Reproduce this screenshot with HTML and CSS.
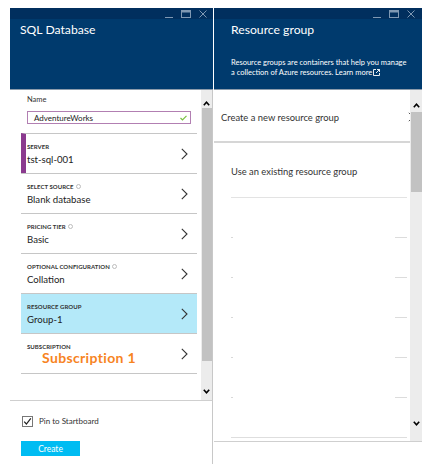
FILE: index.html
```html
<!DOCTYPE html>
<html>
<head>
<meta charset="utf-8">
<link rel="stylesheet" href="styles.css">
</head>
<body>
<div class="page">
  <section class="blade blade-left">
    <header class="head">
      <div class="ctl">
        <svg class="ic-min" width="8" height="8" viewBox="0 0 8 8"><path d="M0 7.5H8" stroke="#7f98b3" stroke-width="1"/></svg>
        <svg class="ic-max" width="10" height="8" viewBox="0 0 10 8"><rect x="0.5" y="0.5" width="9" height="7" fill="none" stroke="#7f98b3" stroke-width="1"/><path d="M0 1.5H10" stroke="#7f98b3" stroke-width="2"/></svg>
        <svg class="ic-close" width="8" height="8" viewBox="0 0 8 8"><path d="M0.5 0.5L7.5 7.5M7.5 0.5L0.5 7.5" stroke="#7f98b3" stroke-width="1"/></svg>
      </div>
      <h1 class="title title-left">SQL Database</h1>
    </header>
    <div class="body">
      <div class="content">
        <div class="name">
          <div class="name-label">Name</div>
          <div class="input">
            <span>AdventureWorks</span>
            <svg width="7" height="6" viewBox="0 0 7 6"><path d="M0.5 3L2.5 5L6.5 0.8" fill="none" stroke="#7ac143" stroke-width="1.2"/></svg>
          </div>
        </div>
        <div class="row row-server">
          <div class="txt"><div class="lbl">SERVER</div><div class="val">tst-sql-001</div></div>
          <svg class="chev" width="7" height="12" viewBox="0 0 7 12"><path d="M0.8 0.8L6 6L0.8 11.2" fill="none" stroke="#333" stroke-width="1.1"/></svg>
        </div>
        <div class="row">
          <div class="txt"><div class="lbl">SELECT SOURCE <i class="info"></i></div><div class="val">Blank database</div></div>
          <svg class="chev" width="7" height="12" viewBox="0 0 7 12"><path d="M0.8 0.8L6 6L0.8 11.2" fill="none" stroke="#333" stroke-width="1.1"/></svg>
        </div>
        <div class="row">
          <div class="txt"><div class="lbl">PRICING TIER <i class="info"></i></div><div class="val">Basic</div></div>
          <svg class="chev" width="7" height="12" viewBox="0 0 7 12"><path d="M0.8 0.8L6 6L0.8 11.2" fill="none" stroke="#333" stroke-width="1.1"/></svg>
        </div>
        <div class="row">
          <div class="txt"><div class="lbl">OPTIONAL CONFIGURATION <i class="info"></i></div><div class="val">Collation</div></div>
          <svg class="chev" width="7" height="12" viewBox="0 0 7 12"><path d="M0.8 0.8L6 6L0.8 11.2" fill="none" stroke="#333" stroke-width="1.1"/></svg>
        </div>
        <div class="row row-active">
          <div class="txt"><div class="lbl">RESOURCE GROUP</div><div class="val">Group-1</div></div>
          <svg class="chev" width="7" height="12" viewBox="0 0 7 12"><path d="M0.8 0.8L6 6L0.8 11.2" fill="none" stroke="#333" stroke-width="1.1"/></svg>
        </div>
        <div class="row row-last">
          <div class="txt"><div class="lbl">SUBSCRIPTION</div><div class="val val-sub">Subscription 1</div></div>
          <svg class="chev" width="7" height="12" viewBox="0 0 7 12"><path d="M0.8 0.8L6 6L0.8 11.2" fill="none" stroke="#333" stroke-width="1.1"/></svg>
        </div>
      </div>
      <div class="scroll scroll-left">
        <div class="arrow"><svg width="7" height="5" viewBox="0 0 7 5"><path d="M0.8 4.2L3.5 1.2L6.2 4.2" fill="none" stroke="#000" stroke-width="1.6"/></svg></div>
        <div class="thumb thumb-left"></div>
        <div class="gap"></div>
        <div class="arrow"><svg width="7" height="5" viewBox="0 0 7 5"><path d="M0.8 0.8L3.5 3.8L6.2 0.8" fill="none" stroke="#000" stroke-width="1.6"/></svg></div>
      </div>
    </div>
    <footer class="foot">
      <label class="pin"><span class="box"><svg width="9" height="9" viewBox="0 0 9 9"><path d="M1.2 4.6L3.4 7L7.8 1.4" fill="none" stroke="#222" stroke-width="1.2"/></svg></span>Pin to Startboard</label>
      <button class="create">Create</button>
    </footer>
  </section>

  <section class="blade blade-right">
    <header class="head">
      <div class="ctl">
        <svg class="ic-min" width="8" height="8" viewBox="0 0 8 8"><path d="M0 7.5H8" stroke="#7f98b3" stroke-width="1"/></svg>
        <svg class="ic-max" width="10" height="8" viewBox="0 0 10 8"><rect x="0.5" y="0.5" width="9" height="7" fill="none" stroke="#7f98b3" stroke-width="1"/><path d="M0 1.5H10" stroke="#7f98b3" stroke-width="2"/></svg>
        <svg class="ic-close" width="8" height="8" viewBox="0 0 8 8"><path d="M0.5 0.5L7.5 7.5M7.5 0.5L0.5 7.5" stroke="#7f98b3" stroke-width="1"/></svg>
      </div>
      <h1 class="title title-right">Resource group</h1>
      <p class="desc">Resource groups are containers that help you manage<br>a collection of Azure resources. Learn more<svg class="ext" width="7" height="7" viewBox="0 0 7 7"><path d="M3 0.5H0.5V6.5H6.5V4" fill="none" stroke="#fff" stroke-width="0.9"/><path d="M4 0.5H6.5V3M6.5 0.5L3 4" fill="none" stroke="#fff" stroke-width="0.9"/></svg></p>
    </header>
    <div class="body body-right">
      <div class="content-right">
        <div class="opt opt-new">
          <span>Create a new resource group</span>
          <svg class="chev-cut" width="7" height="10" viewBox="0 0 7 10"><path d="M0.8 0.8L5 5L0.8 9.2" fill="none" stroke="#555" stroke-width="1"/></svg>
        </div>
        <div class="existing">
          <div class="opt-use">Use an existing resource group</div>
          <div class="list">
            <div class="item"><i class="dot"></i><i class="dash"></i></div>
            <div class="item"><i class="dot"></i><i class="dash"></i></div>
            <div class="item"><i class="dot"></i><i class="dash"></i></div>
            <div class="item"><i class="dot"></i><i class="dash"></i></div>
            <div class="item"><i class="dot"></i><i class="dash"></i></div>
            <div class="item item-end"></div>
          </div>
        </div>
      </div>
      <div class="scroll scroll-right">
        <div class="arrow"><svg width="7" height="5" viewBox="0 0 7 5"><path d="M0.8 4.2L3.5 1.2L6.2 4.2" fill="none" stroke="#000" stroke-width="1.6"/></svg></div>
        <div class="thumb thumb-right"></div>
        <div class="gap"></div>
        <div class="arrow"><svg width="7" height="5" viewBox="0 0 7 5"><path d="M0.8 0.8L3.5 3.8L6.2 0.8" fill="none" stroke="#000" stroke-width="1.6"/></svg></div>
      </div>
    </div>
  </section>
</div>
</body>
</html>
```
FILE: styles.css
```css
* { box-sizing: border-box; }
html, body { margin: 0; padding: 0; background: #fff; }
body { font-family: Lato, "Open Sans", sans-serif; color: #222; width: 435px; height: 464px; overflow: hidden; }

.page { display: flex; gap: 1px; padding: 8px 0 0 10px; height: 464px; }

.blade { display: flex; flex-direction: column; }
.blade-left { width: 203px; }
.blade-right { width: 208px; }

.head {
  height: 82px;
  background: #003a6d;
  border-bottom: 1px solid #8c9bab;
  display: flex;
  flex-direction: column;
}
.ctl {
  height: 11px;
  background: #012f5e;
  display: flex;
  justify-content: flex-end;
  align-items: center;
  gap: 8px;
  padding-right: 6px;
}
.ctl svg { display: block; }
.blade-right .ctl { padding-right: 7px; }

.title { margin: 0; font-weight: 400; color: #fff; font-size: 12.2px; line-height: 14px; }
.title-left { padding: 4px 0 0 10px; }
.title-right { padding: 4px 0 0 17px; }

.desc {
  margin: 21px 0 0 17px;
  color: #fff;
  font-size: 7.5px;
  line-height: 10px;
}
.ext { display: inline-block; vertical-align: -1px; margin-left: 1px; }

.body { display: flex; height: 310px; border-right: 1px solid #c8c8c8; }
.content { width: 191px; padding-left: 11px; }

.name { height: 43px; padding-top: 5px; }
.name-label { font-size: 7.5px; line-height: 10px; color: #333; padding-left: 6px; }
.input {
  margin: 6px 0 0 6px;
  width: 164px;
  height: 13px;
  border: 1px solid #b27fb2;
  display: flex;
  align-items: center;
  justify-content: space-between;
  padding: 0 3px 0 6px;
  font-size: 8px;
}
.input svg { display: block; }

.row {
  width: 176px;
  height: 40px;
  border-top: 1px solid #c6c6c6;
  display: flex;
  align-items: center;
  justify-content: space-between;
  padding: 0 9px 0 6px;
}
.row-last { border-bottom: 1px solid #c6c6c6; height: 41px; }
.row-server { border-left: 5px solid #8b3a8f; padding-left: 1px; }
.row-active { background: #b4e9f9; }
.txt { align-self: flex-start; padding-top: 9px; }
.lbl { font-size: 6px; line-height: 8px; color: #333; font-weight: 700; letter-spacing: 0.05px; }
.val { font-size: 9.6px; line-height: 14px; margin-top: 2px; color: #222; }
.val-sub { color: #f7841f; font-weight: 700; font-size: 14px; letter-spacing: 0.35px; line-height: 14px; padding-left: 15px; margin-top: 0; }
.info {
  display: inline-block;
  width: 5px;
  height: 5px;
  border-radius: 50%;
  border: 1px solid #bdbdbd;
  vertical-align: 0;
  margin-left: 1px;
}
.chev { display: block; flex-shrink: 0; }

.scroll { display: flex; flex-direction: column; background: #ececec; }
.scroll-left { width: 11px; }
.scroll-right { width: 12px; }
.arrow { height: 18px; display: flex; align-items: center; justify-content: center; }
.arrow svg { display: block; }
.thumb { background: #c2c2c2; }
.thumb-left { height: 253px; margin: 0 0 0 1px; }
.thumb-right { height: 80px; margin: 0 0 0 1px; }
.gap { flex: 1; }
.scroll-left .arrow:first-child { align-items: flex-end; padding-bottom: 2px; }
.scroll-right .arrow:first-child { height: 22px; align-items: flex-end; padding-bottom: 4px; }
.scroll-right .arrow:last-child { height: 22px; align-items: flex-start; padding-top: 2px; }

.foot { border-top: 1px solid #cfcfcf; border-right: 1px solid #c8c8c8; flex: 1; padding: 14px 0 0 12px; }
.pin { display: flex; align-items: center; font-size: 8px; color: #333; height: 12px; gap: 6px; }
.box {
  width: 11px; height: 11px;
  border: 1px solid #777;
  display: flex; align-items: center; justify-content: center;
  background: #fff;
}
.box svg { display: block; }
.create {
  display: block;
  margin: 14px 0 0 -1px;
  width: 59px;
  height: 15px;
  border: 0;
  padding: 0;
  background: #00bcf2;
  color: #fff;
  font-family: Lato, "Open Sans", sans-serif;
  font-size: 8.5px;
}

.body-right { height: 352px; border-right: 0; border-bottom: 1px solid #cfcfcf; }
.content-right { width: 196px; overflow: hidden; }
.opt {
  height: 53px;
  display: flex;
  align-items: center;
  justify-content: space-between;
  padding: 3px 0 0 7px;
  font-size: 9.4px;
  color: #333;
  border-bottom: 2px solid #d6d6d6;
}
.chev-cut { display: block; margin-right: -5px; }
.existing { padding: 0 3px 0 17px; }
.opt-use { height: 55px; display: flex; align-items: center; font-size: 9.4px; color: #333; border-bottom: 1px solid #e3e3e3; padding-top: 2px; }
.list { display: flex; flex-direction: column; }
.item { height: 40px; display: flex; justify-content: space-between; align-items: flex-end; }
.dot { display: block; width: 2px; height: 1px; background: #d8d8d8; }
.dash { display: block; width: 12px; height: 1px; background: #dcdcdc; }
.item-end { border-bottom: 1px solid #dedede; }
```
